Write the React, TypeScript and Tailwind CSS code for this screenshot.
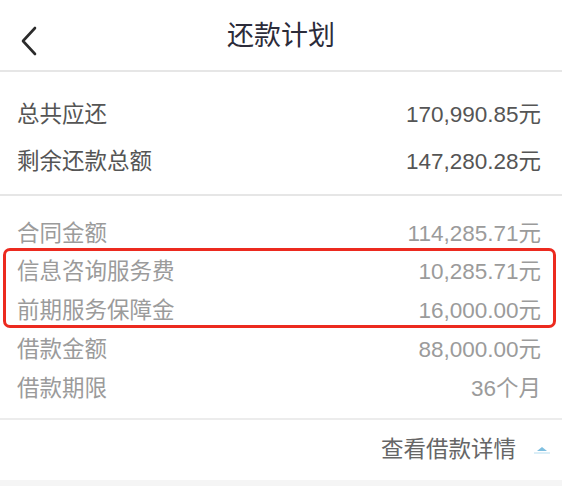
import React from "react";

const font = { fontFamily: '"Liberation Sans", "Noto Sans CJK SC", sans-serif' };

type Row = { label: string; value: string };

const summary: Row[] = [
  { label: "总共应还", value: "170,990.85元" },
  { label: "剩余还款总额", value: "147,280.28元" },
];

const details: Row[] = [
  { label: "合同金额", value: "114,285.71元" },
  { label: "信息咨询服务费", value: "10,285.71元" },
  { label: "前期服务保障金", value: "16,000.00元" },
  { label: "借款金额", value: "88,000.00元" },
  { label: "借款期限", value: "36个月" },
];

export default function App() {
  return (
    <div className="w-[562px] h-[486px] bg-white overflow-hidden flex flex-col" style={font}>
      {/* Header */}
      <div className="relative h-[72px] flex items-center justify-center border-b-2 border-[#e6e6e6] shrink-0">
        <svg className="absolute left-[18px] top-[25px]" width="22" height="32" viewBox="0 0 22 32" fill="none">
          <path d="M17 3 L5 16 L17 29" stroke="#2b2b2b" strokeWidth="2.6" strokeLinecap="round" strokeLinejoin="round" />
        </svg>
        <span className="text-[27px] text-[#2c2c3a] mt-[2px]">还款计划</span>
      </div>

      {/* Summary */}
      <div className="px-[17px] pt-[19px] pb-[9px] border-b-2 border-[#e6e6e6] shrink-0">
        {summary.map((r) => (
          <div key={r.label} className="h-[47px] flex items-center justify-between text-[22.5px] text-[#555555]">
            <span>{r.label}</span>
            <span className="pr-[4px]">{r.value}</span>
          </div>
        ))}
      </div>

      {/* Details */}
      <div className="relative px-[17px] pt-[18px] pb-[10px] border-b-2 border-[#ececec] shrink-0">
        {details.map((r) => (
          <div key={r.label} className="h-[38.75px] flex items-center justify-between text-[22.5px] text-[#9b9b9b]">
            <span>{r.label}</span>
            <span className="pr-[4px]">{r.value}</span>
          </div>
        ))}
        {/* red highlight annotation */}
        <div className="absolute left-[3px] right-[6px] top-[52px] h-[80px] border-[3px] border-[#ec2a1f] rounded-[7px] pointer-events-none" />
      </div>

      {/* Footer toggle */}
      <div className="h-[60px] flex items-center justify-end pr-[10px] gap-[16px] shrink-0">
        <span className="text-[22.5px] text-[#666666]">查看借款详情</span>
        <svg width="20" height="12" viewBox="0 0 20 12" fill="none">
          <path d="M5 7 L10 3 L15 7 Z" fill="#7fbfe0" />
          <path d="M2 9 H18" stroke="#cfe8f4" strokeWidth="1.5" />
        </svg>
      </div>
      <div className="flex-1 bg-[#f5f5f5]" />
    </div>
  );
}
